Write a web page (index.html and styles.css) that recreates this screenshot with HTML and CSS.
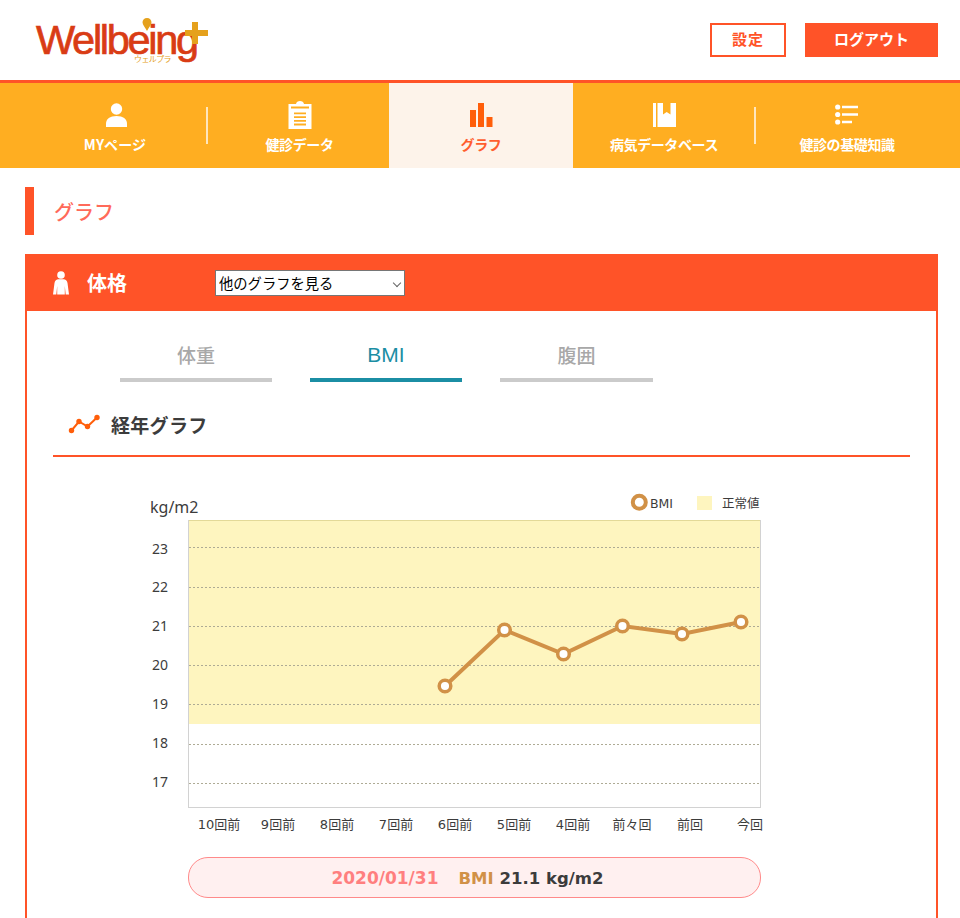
FILE: index.html
```html
<!DOCTYPE html>
<html lang="ja">
<head>
<meta charset="utf-8">
<title>グラフ | Wellbeing+</title>
<link rel="stylesheet" href="styles.css">
</head>
<body>
<header class="site-header">
  <a class="logo" href="#">
    <span class="logo-word">Wellbeing</span>
    <svg class="logo-marks" width="180" height="48" viewBox="0 0 180 48">
      <path d="M111 3c2.700 0 4.500 2 4.500 4.300 0 2.500-2.700 5.200-4.500 8.700-1.800-3.500-4.500-6.200-4.500-8.700C106.500 5 108.300 3 111 3z" fill="#e5a11c"/>
      <path d="M156 7h6v8h10v6h-10v8h-6v-8h-7v-6h7z" fill="#e5a11c"/>
    </svg>
    <span class="logo-kana">ウェルプラ</span>
  </a>
  <div class="header-actions">
    <a class="btn btn-outline" href="#">設定</a>
    <a class="btn btn-solid" href="#">ログアウト</a>
  </div>
</header>

<nav class="main-nav">
  <a class="nav-item" href="#">
    <svg class="nav-icon" width="24" height="26" viewBox="0 0 24 26"><circle cx="13.500" cy="6" r="5.700" fill="#fff"/><path d="M3 24v-3.500C3 16 7 13 13.500 13S24 16 24 20.500V24z" fill="#fff"/></svg>
    <span class="nav-label-wide">MYページ</span>
  </a>
  <a class="nav-item nav-sep nav-shift" href="#">
    <svg class="nav-icon nav-icon-tall" width="24" height="28" viewBox="0 0 24 28"><path fill-rule="evenodd" d="M0.500 3H8C8.300 1.300 10 0 12 0s3.700 1.300 4 3h7.500v25H0.500zM6 11.500v1.800h12v-1.800zM6 15.200V17h12v-1.800zM6 18.900v1.800h12v-1.800zM6 22.600v1.800h12v-1.800zM3 5.500v2h18v-2z" fill="#fff"/></svg>
    <span>健診データ</span>
  </a>
  <a class="nav-item nav-active" href="#">
    <svg class="nav-icon" width="24" height="26" viewBox="0 0 24 26"><path d="M1 7h6v17H1zM9 0h6v24H9zM17.500 14h6v10h-6z" fill="#ff5e0a"/></svg>
    <span>グラフ</span>
  </a>
  <a class="nav-item" href="#">
    <svg class="nav-icon" width="24" height="26" viewBox="0 0 24 26"><path d="M1 0h3v24H1zM5.500 0H11v11.500l3.700-2.500 3.800 2.500V0H24v24H5.500z" fill="#fff"/></svg>
    <span>病気データベース</span>
  </a>
  <a class="nav-item nav-sep" href="#">
    <svg class="nav-icon" width="24" height="26" viewBox="0 0 24 26"><circle cx="2.700" cy="4" r="2.600" fill="#fff"/><circle cx="2.700" cy="11.500" r="2.600" fill="#fff"/><circle cx="2.700" cy="19" r="2.600" fill="#fff"/><path d="M7 2.800h16v2.500H7zM7 10.300h16v2.500H7zM7 17.800h10v2.500H7z" fill="#fff"/></svg>
    <span>健診の基礎知識</span>
  </a>
</nav>

<main class="page">
  <h1 class="page-title">グラフ</h1>

  <section class="card">
    <div class="card-head">
      <div class="card-label">
        <svg width="18" height="24" viewBox="0 0 18 24"><circle cx="9" cy="4" r="3.800" fill="#fff"/><path d="M1 23.500 2.500 12c.3-2.500 2-3.800 4-3.800h5c2 0 3.700 1.300 4 3.800L17 23.500h-3.300L12.800 15v8.500H5.200V15l-.9 8.500z" fill="#fff"/></svg>
        <span>体格</span>
      </div>
      <div class="select-wrap">
        <select class="graph-select"><option>他のグラフを見る</option></select>
      </div>
    </div>

    <div class="card-body">
      <div class="tabs">
        <a class="tab" href="#">体重</a>
        <a class="tab tab-active" href="#">BMI</a>
        <a class="tab tab-wide" href="#">腹囲</a>
      </div>

      <h2 class="section-title">
        <svg width="32" height="20" viewBox="0 0 32 20"><path d="M3.500 16.500 11 7.500l8.500 5L29 3.500" fill="none" stroke="#ff5e0a" stroke-width="2"/><circle cx="3.500" cy="16.500" r="2.700" fill="#ff5e0a"/><circle cx="11" cy="7.500" r="2.700" fill="#ff5e0a"/><circle cx="19.500" cy="12.500" r="2.700" fill="#ff5e0a"/><circle cx="29" cy="3.500" r="2.700" fill="#ff5e0a"/></svg>
        <span>経年グラフ</span>
      </h2>

      <div class="chart-wrap">
        <svg class="chart" width="640" height="355" viewBox="0 0 640 355">
          <g transform="translate(-140 -490)">
            <text class="t-unit" x="150" y="513">kg/m2</text>
            <circle cx="639.300" cy="502.300" r="6.500" fill="#fff" stroke="#d19147" stroke-width="4"/>
            <text class="t-legend" x="650" y="508">BMI</text>
            <rect x="697" y="496" width="15" height="14" fill="#fef5bf"/>
            <text class="t-legend" x="722" y="508">正常値</text>

            <rect x="188.500" y="520.500" width="572" height="287" fill="#fff" stroke="#d2d2d2"/>
            <rect x="189" y="521" width="571" height="203" fill="#fef5bf"/>
            <path d="M189 520.500h571" stroke="#e3d998"/>

            <g class="grid">
              <path d="M189 547.500h571"/><path d="M189 587.500h571"/><path d="M189 626.500h571"/><path d="M189 665.500h571"/><path d="M189 704.500h571"/><path d="M189 744.500h571"/><path d="M189 783.500h571"/>
            </g>

            <g class="t-y">
              <text x="152" y="554">23</text><text x="152" y="592">22</text><text x="152" y="631">21</text><text x="152" y="670">20</text><text x="152" y="709">19</text><text x="152" y="748">18</text><text x="152" y="787">17</text>
            </g>

            <polyline points="445,686 504.500,630 563.500,654 622.500,626 682,634 741,622" fill="none" stroke="#d19147" stroke-width="4"/>
            <g fill="#fff" stroke="#d19147" stroke-width="3.500">
              <circle cx="445" cy="686" r="5.800"/><circle cx="504.500" cy="630" r="5.800"/><circle cx="563.500" cy="654" r="5.800"/><circle cx="622.500" cy="626" r="5.800"/><circle cx="682" cy="634" r="5.800"/><circle cx="741" cy="622" r="5.800"/>
            </g>

            <g class="t-x">
              <text x="219" y="829">10回前</text><text x="278" y="829">9回前</text><text x="337" y="829">8回前</text><text x="396" y="829">7回前</text><text x="455" y="829">6回前</text><text x="514" y="829">5回前</text><text x="573" y="829">4回前</text><text x="632" y="829">前々回</text><text x="690" y="829">前回</text><text x="750" y="829">今回</text>
            </g>
          </g>
        </svg>
      </div>

      <div class="result-pill">
        <span class="r-date">2020/01/31</span>
        <span class="r-label">BMI</span>
        <span class="r-value">21.1 kg/m2</span>
      </div>
    </div>
  </section>
</main>
</body>
</html>
```

FILE: styles.css
```css
* { box-sizing: border-box; }

html, body {
  margin: 0;
  height: 918px;
  overflow: hidden;
}

body {
  background: #fff;
  color: #333;
  font-family: "DejaVu Sans", "Noto Sans CJK JP", sans-serif;
}

a { text-decoration: none; color: inherit; }

.site-header {
  height: 83px;
  border-bottom: 3px solid #ff5328;
  display: flex;
  align-items: flex-start;
  justify-content: space-between;
  padding: 23px 22px 0 36px;
}

.logo {
  position: relative;
  display: block;
  width: 180px;
  height: 48px;
  margin-top: -8px;
}

.logo-word {
  position: absolute;
  left: 0;
  top: 1px;
  font-family: "Liberation Sans", sans-serif;
  font-size: 41.500px;
  line-height: 47px;
  letter-spacing: -2.300px;
  font-weight: 400;
  color: #d93c15;
  -webkit-text-stroke: 0.7px #d93c15;
}

.logo-marks { position: absolute; left: 0; top: 0; }

.logo-kana {
  position: absolute;
  left: 98px;
  top: 40px;
  font-family: "Noto Sans CJK JP", sans-serif;
  font-size: 8px;
  line-height: 8px;
  letter-spacing: -0.600px;
  color: #e5a11c;
  background: #fff;
  height: 8px;
}

.header-actions { display: flex; gap: 19px; }

.btn {
  height: 34px;
  display: flex;
  align-items: center;
  justify-content: center;
  font-family: "Noto Sans CJK JP", sans-serif;
  font-size: 15px;
  font-weight: 700;
  padding-bottom: 3px;
}

.btn-outline {
  width: 76px;
  border: 2px solid #ff5328;
  color: #ff5328;
  background: #fff;
  letter-spacing: 1px;
}

.btn-solid {
  width: 133px;
  background: #ff5328;
  color: #fff;
}

.main-nav {
  height: 85px;
  background: #ffae21;
  display: grid;
  grid-template-columns: 184px 182px 184px 182px 184px;
  padding-left: 23px;
  position: relative;
}

.nav-item {
  position: relative;
  display: flex;
  flex-direction: column;
  align-items: center;
  color: #fff;
  font-family: "Noto Sans CJK JP", sans-serif;
  font-size: 14px;
  letter-spacing: -0.400px;
  font-weight: 700;
  line-height: 20px;
  padding-top: 20px;
}

.nav-shift { padding-left: 3px; }

.nav-label-wide { letter-spacing: 0.100px; }

.nav-icon {
  height: 26px;
  flex: none;
  margin-bottom: 5px;
}

.nav-icon-tall {
  height: 28px;
  margin-top: -2px;
}

.nav-sep::before {
  content: "";
  position: absolute;
  left: -1px;
  top: 24px;
  width: 2px;
  height: 37px;
  background: #ffe6bd;
}

.nav-active {
  background: #fdf3ea;
  color: #ff5e2e;
}

.page { padding: 19px 22px 0 25px; }

.page-title {
  margin: 0 0 19px;
  height: 48px;
  border-left: 9px solid #ff5328;
  padding-left: 20px;
  display: flex;
  align-items: center;
  font-family: "Noto Sans CJK JP", sans-serif;
  font-size: 20px;
  font-weight: 500;
  color: #ff6a5a;
}

.card {
  border: 2px solid #ff5328;
  border-top: 0;
  height: 800px;
}

.card-head {
  height: 57px;
  margin: 0 -2px;
  background: #ff5328;
  display: flex;
  align-items: center;
  padding-left: 27px;
}

.card-label {
  width: 163px;
  display: flex;
  align-items: center;
  gap: 17px;
  color: #fff;
  font-family: "Noto Sans CJK JP", sans-serif;
  font-size: 20px;
  font-weight: 700;
}

.select-wrap {
  position: relative;
  width: 190px;
  height: 26px;
}

.select-wrap::after {
  content: "";
  position: absolute;
  right: 5px;
  top: 10px;
  width: 5px;
  height: 5px;
  border-right: 1px solid #666;
  border-bottom: 1px solid #666;
  transform: rotate(45deg);
  pointer-events: none;
}

.graph-select {
  appearance: none;
  display: block;
  width: 100%;
  height: 100%;
  background: #fff;
  border: 1px solid #767676;
  border-radius: 0;
  font-family: "Noto Sans CJK JP", sans-serif;
  font-size: 14.300px;
  color: #000;
  padding: 0 0 0 3px;
}

.card-body { padding: 0 26px; }

.tabs {
  display: flex;
  gap: 38px;
  padding: 27px 0 0 67px;
}

.tab {
  width: 152px;
  height: 44px;
  border-bottom: 4px solid #cbcbcb;
  text-align: center;
  font-family: "Noto Sans CJK JP", sans-serif;
  font-size: 19px;
  font-weight: 500;
  line-height: 34px;
  color: #a8a8a8;
}

.tab-wide { width: 153px; }

.tab-active {
  border-bottom-color: #1b8ea4;
  color: #1b8ea4;
  font-family: "Liberation Sans", sans-serif;
  font-size: 21px;
}

.section-title {
  margin: 26px 0 0;
  height: 49px;
  border-bottom: 2px solid #ff5328;
  display: flex;
  align-items: flex-start;
  gap: 11px;
  padding-left: 15px;
  font-family: "Noto Sans CJK JP", sans-serif;
  font-size: 19px;
  letter-spacing: 0.300px;
  font-weight: 700;
  line-height: 34px;
  color: #3c3c3c;
}

.section-title svg { margin-top: 6px; }

.chart-wrap {
  margin: 33px 0 0 87px;
  height: 355px;
}

.chart { display: block; }

.chart text {
  font-family: "DejaVu Sans", "Noto Sans CJK JP", sans-serif;
  fill: #3c3c3c;
}

.chart .t-unit { font-family: "Noto Sans", sans-serif; font-size: 16px; }
.chart .t-legend { font-size: 12.500px; }
.chart .t-y text { font-family: "Noto Sans", sans-serif; font-size: 14px; }
.chart .t-x text { font-size: 13px; text-anchor: middle; }

.grid path {
  stroke: #aeab95;
  stroke-width: 1;
  stroke-dasharray: 2 2;
  fill: none;
}

.result-pill {
  margin: 12px 0 0 135px;
  width: 573px;
  height: 41px;
  border: 1px solid #ff8a8a;
  border-radius: 20px;
  background: #fff0f0;
  display: flex;
  align-items: center;
  justify-content: center;
  font-size: 16.500px;
  font-weight: 700;
  padding: 1px 14px 0 0;
}

.r-date { color: #ff7f7f; margin-right: 20px; font-size: 17px; }
.r-label { color: #d19147; margin-right: 6px; }
.r-value { color: #3c3c3c; }
```
